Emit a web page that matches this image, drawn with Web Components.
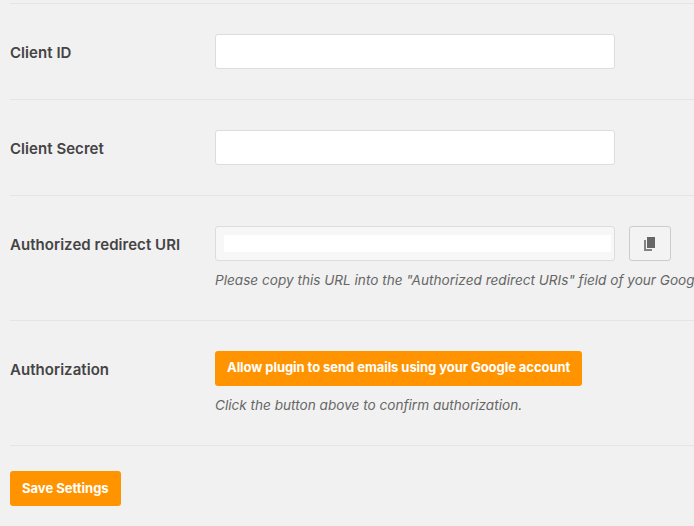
<!DOCTYPE html>
<html>
<head>
<meta charset="utf-8">
<title>Settings</title>
<style>
    html, body { margin: 0; height: 100%; overflow: hidden; background: #f1f1f1; }
    body { font-family: Inter, "Liberation Sans", sans-serif; color: #444; padding: 3px 0 0 10px; box-sizing: border-box; }
</style>
</head>
<body>
<setting-row label="Client ID"><text-field></text-field></setting-row>
<setting-row label="Client Secret"><text-field></text-field></setting-row>
<setting-row label="Authorized redirect URI">
    <div style="display:flex;gap:14px"><text-field readonly></text-field><copy-button></copy-button></div>
    <field-note>Please copy this URL into the "Authorized redirect URIs" field of your Google</field-note>
</setting-row>
<setting-row label="Authorization" class="auth">
    <orange-button>Allow plugin to send emails using your Google account</orange-button>
    <field-note>Click the button above to confirm authorization.</field-note>
</setting-row>
<save-bar><orange-button style="letter-spacing:0;line-height:35px">Save Settings</orange-button></save-bar>

<script>
class SettingRow extends HTMLElement {
    constructor() {
        super();
        const label = this.getAttribute('label') || '';
        this.attachShadow({ mode: 'open' }).innerHTML = `
            <style>
                :host {
                    display: flex;
                    border-top: 1px solid #e5e5e5;
                    padding: 30px 0;
                }
                .label {
                    flex: none;
                    width: 205px;
                    height: 34px;
                    padding-top: 1px;
                    line-height: 35px;
                    font-size: 15px;
                    letter-spacing: 0.05px;
                    font-weight: 600;
                    color: #444;
                    white-space: nowrap;
                }
                .field { flex: 1; min-width: 0; }
            </style>
            <div class="label">${label}</div>
            <div class="field"><slot></slot></div>
        `;
    }
}
customElements.define('setting-row', SettingRow);

class TextField extends HTMLElement {
    constructor() {
        super();
        this.attachShadow({ mode: 'open' }).innerHTML = `
            <style>
                :host {
                    display: block;
                    box-sizing: border-box;
                    width: 400px;
                    height: 35px;
                    padding: 8px;
                    background: #fff;
                    border: 1px solid #ddd;
                    border-radius: 3px;
                }
                :host([readonly]) { background: #f7f7f7; }
                .inner { height: 100%; }
                :host([readonly]) .inner { background: #fff; margin-right: -5px; }
            </style>
            <div class="inner"></div>
        `;
    }
}
customElements.define('text-field', TextField);

class CopyButton extends HTMLElement {
    constructor() {
        super();
        this.attachShadow({ mode: 'open' }).innerHTML = `
            <style>
                :host {
                    display: flex;
                    align-items: center;
                    justify-content: center;
                    box-sizing: border-box;
                    width: 42px;
                    height: 35px;
                    background: #f3f3f3;
                    border: 1px solid #ccc;
                    border-radius: 3px;
                }
                svg { display: block; width: 11px; height: 14px; margin-right: 1px; fill: #666; }
            </style>
            <svg viewBox="0 0 11 14"><path d="M3 0h8v11H3z"/><path d="M0 3h2v9h6v2H0z" opacity=".8"/></svg>
        `;
    }
}
customElements.define('copy-button', CopyButton);

class FieldNote extends HTMLElement {
    constructor() {
        super();
        this.attachShadow({ mode: 'open' }).innerHTML = `
            <style>
                :host {
                    display: block;
                    margin-top: 10px;
                    font-size: 13.6px;
                    line-height: 19px;
                    font-style: italic;
                    color: #666;
                    white-space: nowrap;
                }
            </style>
            <slot></slot>
        `;
    }
}
customElements.define('field-note', FieldNote);

class OrangeButton extends HTMLElement {
    constructor() {
        super();
        this.attachShadow({ mode: 'open' }).innerHTML = `
            <style>
                :host {
                    display: inline-block;
                    box-sizing: border-box;
                    height: 35px;
                    padding: 0 12px;
                    background: #ff9400;
                    border-radius: 3px;
                    color: #fff;
                    font-size: 13px;
                    font-weight: 700;
                    letter-spacing: -0.06px;
                    line-height: 33px;
                    white-space: nowrap;
                    vertical-align: top;
                }
            </style>
            <slot></slot>
        `;
    }
}
customElements.define('orange-button', OrangeButton);

class SaveBar extends HTMLElement {
    constructor() {
        super();
        this.attachShadow({ mode: 'open' }).innerHTML = `
            <style>
                :host { display: block; border-top: 1px solid #e5e5e5; padding-top: 25px; }
            </style>
            <slot></slot>
        `;
    }
}
customElements.define('save-bar', SaveBar);
</script>
</body>
</html>
